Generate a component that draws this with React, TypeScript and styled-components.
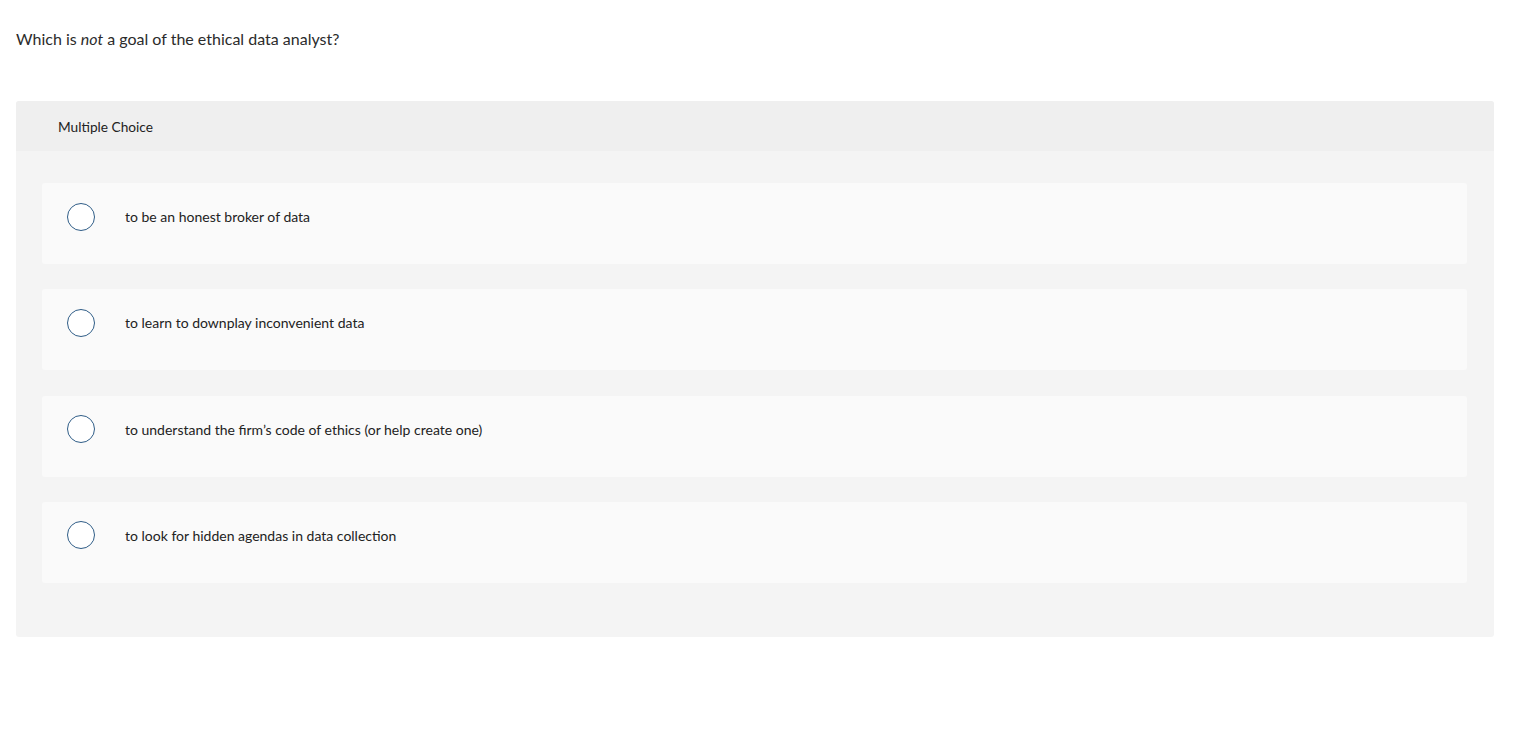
import React from 'react';
import styled, { createGlobalStyle } from 'styled-components';

const GlobalStyle = createGlobalStyle`
  body {
    margin: 0;
    background: #ffffff;
    font-family: Lato, 'Open Sans', Arial, sans-serif;
    color: #1f1f1f;
  }
`;

const Page = styled.main`
  padding: 29px 31px 0 16px;
`;

const Question = styled.p`
  margin: 0 0 52px;
  font-size: 16px;
  line-height: 20px;
  color: #2b2b2b;

  em {
    font-style: italic;
  }
`;

const Panel = styled.section`
  border-radius: 3px;
  background: #f4f4f4;
  overflow: hidden;
`;

const PanelHeader = styled.header`
  display: flex;
  align-items: center;
  height: 50px;
  padding-left: 42px;
  background: #efefef;
  font-size: 13.7px;
  color: #222;
`;

const OptionList = styled.div`
  display: flex;
  flex-direction: column;
  gap: 25.3px;
  padding: 32px 27px 54px 26px;
`;

const Option = styled.label`
  display: flex;
  align-items: center;
  gap: 30px;
  height: 81px;
  padding: 0 0 14px 25px;
  box-sizing: border-box;
  border-radius: 3px;
  background: #fafafa;
  font-size: 14px;
  color: #222;
  cursor: pointer;
`;

const Radio = styled.span`
  flex: none;
  width: 28px;
  height: 28px;
  box-sizing: border-box;
  border: 1.5px solid #2f5d87;
  border-radius: 50%;
  background: #ffffff;
`;

const choices = [
  'to be an honest broker of data',
  'to learn to downplay inconvenient data',
  'to understand the firm\u2019s code of ethics (or help create one)',
  'to look for hidden agendas in data collection',
];

export default function App() {
  return (
    <>
      <GlobalStyle />
      <Page>
        <Question>
          Which is <em>not</em> a goal of the ethical data analyst?
        </Question>
        <Panel>
          <PanelHeader>Multiple Choice</PanelHeader>
          <OptionList>
            {choices.map((c) => (
              <Option key={c}>
                <Radio />
                {c}
              </Option>
            ))}
          </OptionList>
        </Panel>
      </Page>
    </>
  );
}
